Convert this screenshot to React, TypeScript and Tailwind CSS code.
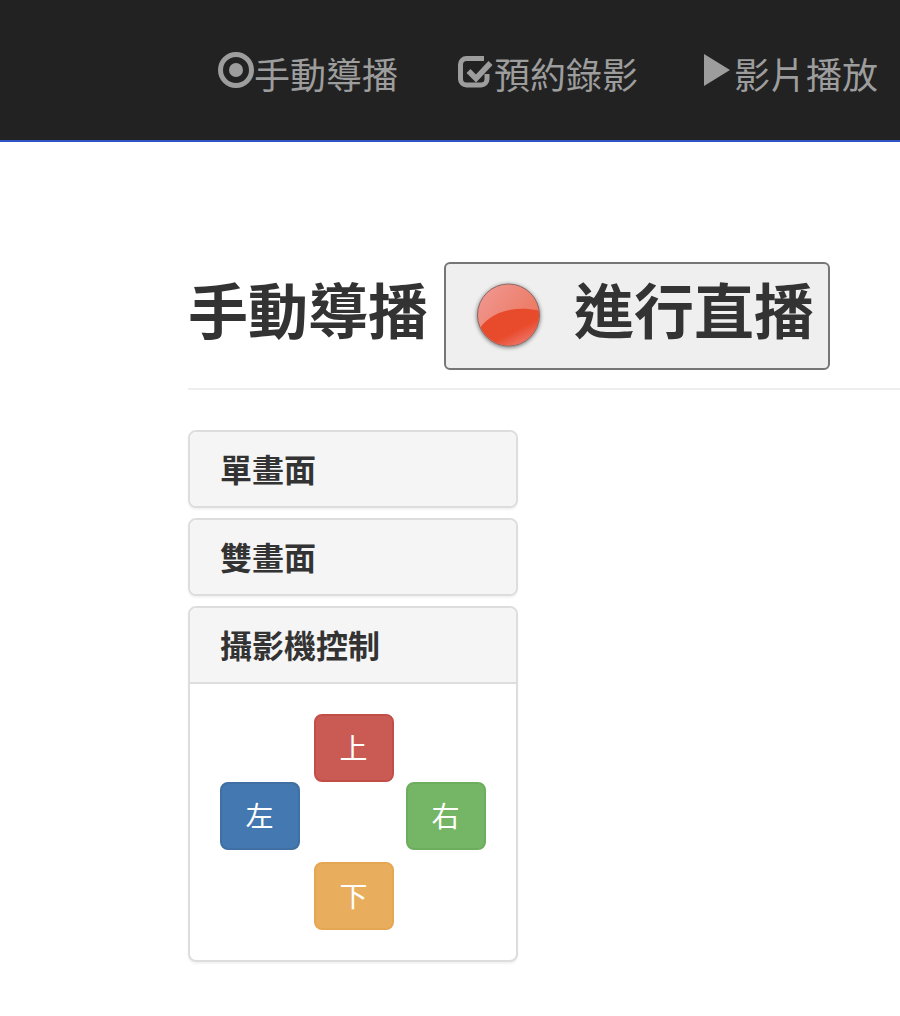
const font = { fontFamily: '"Liberation Sans", "Noto Sans CJK TC", sans-serif' };

const RecordIcon = () => (
  <svg width="36" height="36" viewBox="0 0 36 36" className="shrink-0">
    <circle cx="18" cy="18" r="15.5" fill="none" stroke="#9d9d9d" strokeWidth="5" />
    <circle cx="18" cy="18" r="7" fill="#9d9d9d" />
  </svg>
);

const CheckIcon = () => (
  <svg width="36" height="36" viewBox="0 0 36 36" className="shrink-0" fill="none" stroke="#9d9d9d">
    <path
      d="M26 6.500H8.500A6 6 0 0 0 2.500 12.500V27A6 6 0 0 0 8.500 33H23A6 6 0 0 0 29 27V22"
      strokeWidth="5"
    />
    <path d="M10.500 19L18 26.500L32.500 11" strokeWidth="5.500" />
  </svg>
);

const PlayIcon = () => (
  <svg width="36" height="36" viewBox="0 0 36 36" className="shrink-0">
    <path d="M6 2L32 18 6 34z" fill="#9d9d9d" />
  </svg>
);

const NavItem = ({ icon, label }: { icon: React.ReactNode; label: string }) => (
  <a className="flex items-center text-[36px] leading-[40px] text-[#9d9d9d]">
    <span className="-mt-[14px]">{icon}</span>
    <span>{label}</span>
  </a>
);

const RecordBall = () => (
  <svg
    width="68"
    height="68"
    viewBox="0 0 68 68"
    className="shrink-0 drop-shadow-[0_1px_2px_rgba(0,0,0,0.55)]"
  >
    <defs>
      <linearGradient id="ballTop" x1="0.15" y1="0.05" x2="0.85" y2="0.6">
        <stop offset="0" stopColor="#f0958e" />
        <stop offset="1" stopColor="#ec7a62" />
      </linearGradient>
      <linearGradient id="ballLow" x1="0.2" y1="0.25" x2="0.85" y2="1">
        <stop offset="0" stopColor="#e84a2c" />
        <stop offset="0.5" stopColor="#e84a2c" />
        <stop offset="1" stopColor="#f28a84" />
      </linearGradient>
      <clipPath id="ballClip">
        <circle cx="33.500" cy="33" r="30.500" />
      </clipPath>
    </defs>
    <circle cx="33.500" cy="33" r="31" fill="url(#ballTop)" stroke="#8c6a66" strokeWidth="1" />
    <g clipPath="url(#ballClip)">
      <path d="M5 46C14 33 34 22 66 29V66H0V50z" fill="url(#ballLow)" />
    </g>
  </svg>
);

const PanelHead = ({ title, line }: { title: string; line?: boolean }) => (
  <div
    className={`h-[74px] bg-[#f5f5f5] pl-[30px] pt-[17px] text-[32px] leading-[44px] font-bold text-[#333] rounded-t-[6px] ${
      line ? "border-b-2 border-[#ddd] h-[76px]" : "rounded-b-[6px]"
    }`}
  >
    {title}
  </div>
);

const Panel = ({ title, children }: { title: string; children?: React.ReactNode }) => (
  <div className="w-[330px] rounded-[8px] border-2 border-[#ddd] bg-white shadow-[0_2px_2px_rgba(0,0,0,0.05)]">
    <PanelHead title={title} line={!!children} />
    {children}
  </div>
);

const DirButton = ({ label, color }: { label: string; color: string }) => (
  <button
    className={`flex h-[68px] w-[80px] items-center justify-center rounded-[8px] border-2 pt-[3px] pr-[1px] text-[28px] leading-none text-white ${color}`}
  >
    {label}
  </button>
);

export default function App() {
  return (
    <div className="min-h-[1016px] overflow-hidden bg-white" style={font}>
      <nav className="h-[142px] border-b-2 border-[#2f55c4] bg-[#222]">
        <div className="flex gap-[60px] pl-[218px] pt-[57px]">
          <NavItem icon={<RecordIcon />} label="手動導播" />
          <NavItem icon={<CheckIcon />} label="預約錄影" />
          <NavItem icon={<PlayIcon />} label="影片播放" />
        </div>
      </nav>

      <main className="pl-[188px] pt-[120px]">
        <div className="flex items-center border-b-2 border-[#eee] pb-[18px]">
          <h1 className="-mt-1 text-[60px] leading-none font-bold text-[#333]">手動導播</h1>
          <button className="ml-[16px] flex h-[108px] w-[386px] items-center rounded-[6px] border-2 border-[#767676] bg-[#efefef] pl-[29px] text-[60px] font-bold text-[#333]">
            <RecordBall />
            <span className="ml-[31px] -mt-1">進行直播</span>
          </button>
        </div>

        <div className="mt-[40px] flex flex-col gap-[10px]">
          <Panel title="單畫面" />
          <Panel title="雙畫面" />
          <Panel title="攝影機控制">
            <div className="flex h-[276px] flex-col pl-[30px] pt-[30px]">
              <div className="pl-[94px]">
                <DirButton label="上" color="bg-[#c95b54] border-[#c24f47]" />
              </div>
              <div className="flex w-[266px] justify-between">
                <DirButton label="左" color="bg-[#4478b0] border-[#3f6fa3]" />
                <DirButton label="右" color="bg-[#74b566] border-[#6cae5e]" />
              </div>
              <div className="mt-[12px] pl-[94px]">
                <DirButton label="下" color="bg-[#e8ae5e] border-[#e6a753]" />
              </div>
            </div>
          </Panel>
        </div>
      </main>
    </div>
  );
}
